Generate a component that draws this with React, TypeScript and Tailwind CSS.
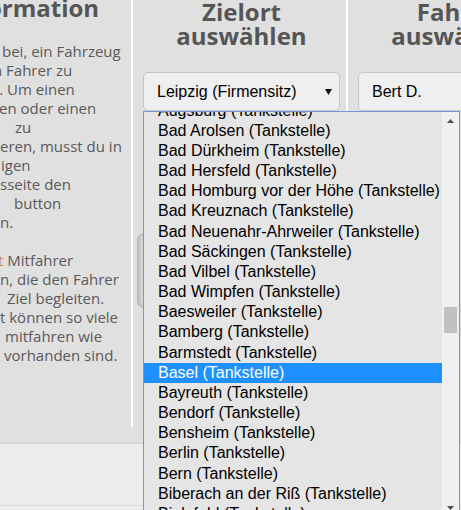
const places = [
  "Augsburg",
  "Bad Arolsen",
  "Bad Dürkheim",
  "Bad Hersfeld",
  "Bad Homburg vor der Höhe",
  "Bad Kreuznach",
  "Bad Neuenahr-Ahrweiler",
  "Bad Säckingen",
  "Bad Vilbel",
  "Bad Wimpfen",
  "Baesweiler",
  "Bamberg",
  "Barmstedt",
  "Basel",
  "Bayreuth",
  "Bendorf",
  "Bensheim",
  "Berlin",
  "Bern",
  "Biberach an der Riß",
  "Bielefeld",
  "Bietigheim-Bissingen",
];

const Arrow = ({ up }: { up?: boolean }) => (
  <svg width="7" height="4" viewBox="0 0 7 4" className="block">
    {up ? <path d="M0 4 L3.5 0 L7 4 Z" fill="#505050" /> : <path d="M0 0 L3.5 4 L7 0 Z" fill="#505050" />}
  </svg>
);

const App = () => {
  return (
    <div className="relative h-[510px] w-full overflow-hidden bg-[#ececec] font-['Open_Sans',sans-serif] text-[#555]">
      <div className="h-[444px] border-b-2 border-[#d9d9d9] bg-[#e0e0e0]">
        <div className="flex h-[427px]">
          {/* Information */}
          <div className="-ml-[82px] w-[215px] shrink-0 overflow-hidden border-r-2 border-white pl-[10px] pr-[6px]">
            <h2 className="-mt-[4px] whitespace-nowrap text-center text-[24px] font-bold leading-[24px]">
              Information
            </h2>
            <div className="ml-[72px] mt-[22px] whitespace-nowrap text-[15px] leading-[19px] text-[#5a5a5a]">
              <div className="pl-[2px]">bei, ein Fahrzeug</div>
              <div className="-ml-[7px]">n Fahrer zu</div>
              <div className="-ml-[10px]">n. Um einen</div>
              <div className="-ml-[1px]">en oder einen</div>
              <div className="pl-[15px]">zu</div>
              <div>eren, musst du in</div>
              <div className="pl-[1px]">igen</div>
              <div>sseite den</div>
              <div className="pl-[14px]">button</div>
              <div>n.</div>
              <div className="h-[19px]" />
              <div className="-ml-[2px]">
                <span className="text-[#c08a4f]">t</span> Mitfahrer
              </div>
              <div>n, die den Fahrer</div>
              <div className="pl-[7px]">Ziel begleiten.</div>
              <div>t können so viele</div>
              <div className="pl-[5px]">mitfahren wie</div>
              <div className="pl-[4px]">vorhanden sind.</div>
            </div>
          </div>

          {/* Zielort */}
          <div className="relative w-[215px] shrink-0 border-r-2 border-white pl-[10px] pr-[6px]">
            <h2 className="text-center text-[24px] font-bold leading-[24px]">
              Zielort
              <br />
              auswählen
            </h2>
            <div className="mt-[24px] flex h-[39px] items-center justify-between rounded-[5px] border border-[#c6c6c6] bg-[#efefef] pl-[13px] pr-[7px] font-['Liberation_Sans',Arial,sans-serif] text-[16px] text-black">
              <span>Leipzig (Firmensitz)</span>
              <svg width="7" height="6" viewBox="0 0 7 6">
                <path d="M0 0 L3.5 6 L7 0 Z" fill="#111" />
              </svg>
            </div>
            <div className="-ml-[6px] mt-[122px] h-[75px] rounded-[7px] border border-[#b4b4b4] bg-[#d6d6d6] shadow-[inset_2px_0_3px_rgba(0,0,0,0.12)]" />

            {/* open select list */}
            <div className="absolute left-[10px] top-[111px] z-10 flex h-[406px] w-[317px] border border-[#7896d2] bg-[#e5e5e5] font-['Liberation_Sans',Arial,sans-serif] text-[16px] text-black">
              <div className="w-[298px] overflow-hidden">
                <div className="-mt-[11.5px]">
                  {places.map((p) => (
                    <div
                      key={p}
                      className={
                        p === "Basel"
                          ? "h-[20.18px] whitespace-nowrap bg-[#1e90ff] pl-[14px] leading-[20.18px] text-white"
                          : "h-[20.18px] whitespace-nowrap pl-[14px] leading-[20.18px]"
                      }
                    >
                      {p} (Tankstelle)
                    </div>
                  ))}
                </div>
              </div>
              <div className="flex w-[17px] flex-col bg-[#f0f0f0]">
                <div className="flex h-[17px] items-center justify-center">
                  <Arrow up />
                </div>
                <div className="flex-1">
                  <div className="mx-[2px] mt-[178px] h-[26px] bg-[#c1c1c1]" />
                </div>
                <div className="flex h-[17px] items-center justify-center">
                  <Arrow />
                </div>
              </div>
            </div>
          </div>

          {/* Fahrer */}
          <div className="w-[213px] shrink-0 pl-[10px] pr-[6px]">
            <h2 className="text-center text-[24px] font-bold leading-[24px]">
              Fahrer
              <br />
              auswählen
            </h2>
            <div className="mt-[24px] flex h-[39px] items-center rounded-[5px] border border-[#c6c6c6] bg-[#efefef] pl-[13px] font-['Liberation_Sans',Arial,sans-serif] text-[16px] text-black">
              Bert D.
            </div>
          </div>
        </div>
      </div>
      <div className="mt-[61px] border-t border-[#d8d8d8]" />
    </div>
  );
};

export default App;
